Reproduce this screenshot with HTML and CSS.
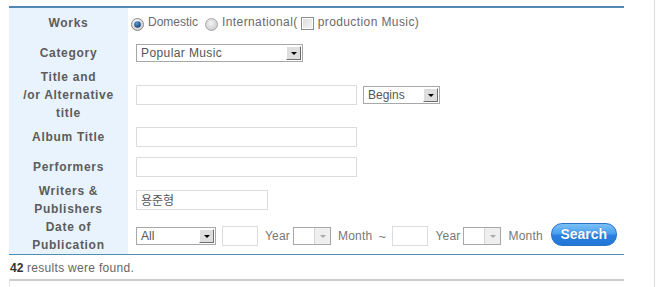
FILE: index.html
```html
<!DOCTYPE html>
<html>
<head>
<meta charset="utf-8">
<link rel="stylesheet" href="styles.css">
</head>
<body>
<div class="page">
  <div class="search">
    <div class="row r30">
      <div class="label">Works</div>
      <div class="field works">
        <svg class="radio" width="13" height="13" viewBox="0 0 13 13">
          <defs>
            <radialGradient id="rg1" cx="0.4" cy="0.35" r="0.7">
              <stop offset="0" stop-color="#ffffff"/>
              <stop offset="1" stop-color="#c8c8c8"/>
            </radialGradient>
            <radialGradient id="dot" cx="0.4" cy="0.35" r="0.7">
              <stop offset="0" stop-color="#5a9ad8"/>
              <stop offset="1" stop-color="#103c6c"/>
            </radialGradient>
          </defs>
          <circle cx="6.5" cy="6.5" r="6" fill="url(#rg1)" stroke="#8a8a8a"/>
          <circle cx="6.5" cy="6.5" r="3.3" fill="url(#dot)"/>
        </svg>
        <span class="opt">Domestic</span>
        <svg class="radio r2" width="13" height="13" viewBox="0 0 13 13">
          <defs>
            <radialGradient id="rg2" cx="0.45" cy="0.4" r="0.7">
              <stop offset="0" stop-color="#f4f4f4"/>
              <stop offset="1" stop-color="#c4c4c4"/>
            </radialGradient>
          </defs>
          <circle cx="6.5" cy="6.5" r="6" fill="url(#rg2)" stroke="#a8a8a8"/>
        </svg>
        <span class="opt wide">International(</span>
        <span class="check"></span>
        <span class="opt wide">production Music)</span>
      </div>
    </div>
    <div class="row r30">
      <div class="label">Category</div>
      <div class="field">
        <div class="select w167"><span class="sel-text wide">Popular Music</span><span class="arrow"></span></div>
      </div>
    </div>
    <div class="row r54">
      <div class="label">Title and<br>/or Alternative<br>title</div>
      <div class="field">
        <span class="input w221"></span>
        <div class="select w77 ml6"><span class="sel-text">Begins</span><span class="arrow"></span></div>
      </div>
    </div>
    <div class="row r30">
      <div class="label">Album Title</div>
      <div class="field"><span class="input w221"></span></div>
    </div>
    <div class="row r30">
      <div class="label">Performers</div>
      <div class="field"><span class="input w221"></span></div>
    </div>
    <div class="row r36">
      <div class="label">Writers &amp;<br>Publishers</div>
      <div class="field"><span class="input w132 ko">용준형</span></div>
    </div>
    <div class="row r36">
      <div class="label">Date of<br>Publication</div>
      <div class="field date">
        <div class="select w80"><span class="sel-text">All</span><span class="arrow"></span></div>
        <span class="input w36 ml6"></span>
        <span class="txt ml7">Year</span>
        <div class="select dis w38 ml3"><span class="sel-text"></span><span class="arrow"></span></div>
        <span class="txt ml7">Month</span>
        <span class="txt tilde ml6">~</span>
        <span class="input w36 ml6"></span>
        <span class="txt ml7">Year</span>
        <div class="select dis w38 ml3"><span class="sel-text"></span><span class="arrow"></span></div>
        <span class="txt ml7">Month</span>
        <span class="btn">Search</span>
      </div>
    </div>
  </div>
  <p class="count"><b>42</b> results were found.</p>
  <div class="list"></div>
</div>
</body>
</html>
```
FILE: styles.css
```css
html, body {
  margin: 0;
  padding: 0;
  background: #ffffff;
}
body {
  font-family: "Liberation Sans", Arial, sans-serif;
  font-size: 12px;
  color: #666;
}
.page {
  box-sizing: border-box;
  width: 655px;
  height: 287px;
  padding: 6px 0 0 9px;
  border-right: 1px solid #dcdcdc;
}
.search {
  width: 615px;
  border-top: 2px solid #5286b4;
  border-bottom: 1px solid #4f8db4;
}
.row {
  display: grid;
  grid-template-columns: 119px 1fr;
}
.r30 { height: 30px; }
.r36 { height: 36px; }
.r54 { height: 54px; }
.label {
  background: #e9f3fd;
  display: flex;
  align-items: center;
  justify-content: center;
  text-align: center;
  font-weight: bold;
  line-height: 18px;
  color: #5c5c5c;
  letter-spacing: 0.7px;
}
.field {
  display: flex;
  align-items: center;
  padding-left: 8px;
}
.works {
  padding-left: 3px;
}
.radio { display: block; margin-top: 2px; }
.opt { margin-left: 4px; color: #6a6a6a; margin-top: -2px; }
.wide { letter-spacing: 0.4px; }
.r2 { margin-left: 7px; }
.check {
  box-sizing: border-box;
  width: 13px;
  height: 13px;
  border: 1px solid #8c8c8c;
  background: linear-gradient(135deg, #dcdcdc, #f6f6f6);
  box-shadow: inset 0 0 0 1px #fff;
  margin-left: 3px;
}
.select {
  box-sizing: border-box;
  height: 18px;
  border: 1px solid #a8a8a8;
  display: flex;
  align-items: center;
  background: #fff;
}
.sel-text {
  flex: 1;
  padding-left: 4px;
  color: #555;
  font-size: 12px;
  line-height: 16px;
}
.arrow {
  box-sizing: border-box;
  width: 15px;
  height: 14px;
  margin-right: 1px;
  background: #dedede;
  border-top: 1px solid #fff;
  border-left: 1px solid #fff;
  border-right: 1px solid #6e6e6e;
  border-bottom: 1px solid #6e6e6e;
  display: flex;
  align-items: center;
  justify-content: center;
}
.arrow::after {
  content: "";
  width: 0;
  height: 0;
  border-left: 3px solid transparent;
  border-right: 3px solid transparent;
  border-top: 3px solid #000;
  margin-top: 1px;
}
.dis {
  border-color: #a6a6a6;
}
.dis .arrow {
  background: #efefef;
  border: 0;
  border-left: 1px solid #d4d4d4;
  width: 16px;
  height: 16px;
  margin-right: 0;
}
.dis .arrow::after {
  border-top-color: #a8a8a8;
}
.input {
  box-sizing: border-box;
  display: block;
  height: 20px;
  border: 1px solid #dcdcdc;
  background: #fff;
}
.ko {
  font-family: "Noto Sans CJK KR", sans-serif;
  font-size: 12px;
  line-height: 18px;
  padding-left: 4px;
  color: #555;
}
.w167 { width: 167px; }
.w77 { width: 77px; }
.w80 { width: 80px; }
.w38 { width: 38px; }
.w36 { width: 36px; }
.w221 { width: 221px; }
.w132 { width: 132px; }
.ml3 { margin-left: 3px; }
.ml6 { margin-left: 6px; }
.ml7 { margin-left: 7px; }
.txt { color: #777; letter-spacing: 0.2px; }
.tilde { width: 8px; font-size: 13px; text-align: center; }
.btn {
  box-sizing: border-box;
  margin-left: 8px;
  margin-bottom: 4px;
  width: 66px;
  height: 23px;
  border-radius: 11px;
  border: 1px solid #2b73c9;
  background: linear-gradient(#7cc0f7 0%, #4a9ff0 45%, #2a7fe0 55%, #2277d6 100%);
  color: #fff;
  font-weight: bold;
  font-size: 14px;
  display: flex;
  align-items: center;
  justify-content: center;
  text-shadow: 0 0 1px #1c5fae;
  padding-bottom: 1px;
}
.count {
  margin: 0;
  height: 24px;
  line-height: 26px;
  padding-left: 1px;
  color: #666;
  letter-spacing: 0.3px;
}
.count b { color: #333; letter-spacing: 0; }
.list {
  width: 614px;
  height: 8px;
  border-top: 2px solid #cdcdcd;
  border-left: 1px solid #e6e6e6;
}
```
